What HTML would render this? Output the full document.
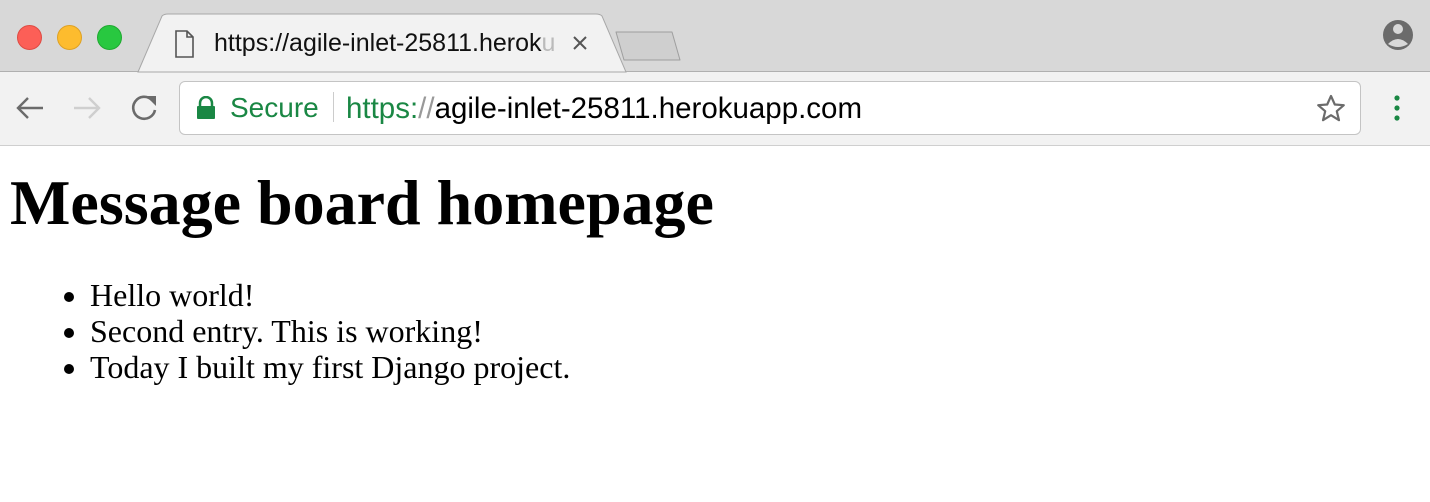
<!DOCTYPE html>
<html><head><style>
body{margin:0;width:1430px;height:502px;background:#fff;position:relative;overflow:hidden;font-family:"Liberation Sans",sans-serif}
.top{position:absolute;left:0;top:0;width:1430px;height:71px;background:#d8d8d8;border-bottom:1px solid #b0b0b0}
.dot{position:absolute;top:25px;width:23px;height:23px;border-radius:50%}
.bar{position:absolute;left:0;top:72px;width:1430px;height:73px;background:#f2f2f2;border-bottom:1px solid #cfcfcf}
.omni{position:absolute;left:179px;top:81px;width:1180px;height:52px;background:#fff;border:1px solid #c4c4c4;border-radius:6px}
.t{position:absolute;white-space:nowrap}
h1{position:absolute;left:10px;top:166px;margin:0;font:bold 64px "Liberation Serif",serif}
ul{position:absolute;left:50px;top:277px;margin:0;padding-left:40px;font:32px "Liberation Serif",serif;line-height:36px}
</style></head><body>
<div class="top"></div>
<div class="bar"></div>
<div class="omni"></div>
<div class="dot" style="left:17px;background:#fc5f57;border:1px solid #de4b43"></div>
<div class="dot" style="left:57px;background:#fdbc2e;border:1px solid #dea123"></div>
<div class="dot" style="left:97px;background:#28c840;border:1px solid #1fa930"></div>
<svg style="position:absolute;left:0;top:0" width="1430" height="146">
<path d="M138 72 L162 16 Q164 14 168 14 L596 14 Q600 14 602 16 L626 72 Z" fill="#f2f2f2" stroke="#a8a8a8"/>
<path d="M616 32 L672 32 L680 60 L624 60 Z" fill="#cfcfcf" stroke="#9e9e9e" stroke-linejoin="round"/>
<path d="M176 31 h11 l6 6 v20 h-17 z M187 31 v6 h6" fill="none" stroke="#555" stroke-width="1.6"/>
<path d="M574 37 l12 12 M586 37 l-12 12" stroke="#555" stroke-width="2"/>
<circle cx="1398" cy="35" r="15" fill="#6b6b6b"/><circle cx="1398" cy="29" r="5" fill="#d8d8d8"/><path d="M1388 44 q10 -10 20 0 q-10 6 -20 0z" fill="#d8d8d8"/>
<path d="M43 108 H18 M28 98 L18 108 L28 118" fill="none" stroke="#6b6b6b" stroke-width="2.4"/>
<path d="M74 108 H99 M89 98 L99 108 L89 118" fill="none" stroke="#cfcfcf" stroke-width="2.4"/>
<path d="M152 100 A11 11 0 1 0 155 110" fill="none" stroke="#6b6b6b" stroke-width="2.6"/><path d="M146 96 L156 96 L156 106 Z" fill="#6b6b6b"/>
<path d="M1331 96 l3.8 8.5 9 .7 -7 6 2.2 9 -8 -5 -8 5 2.2 -9 -7 -6 9 -.7z" fill="none" stroke="#6b6b6b" stroke-width="2.2" stroke-linejoin="round"/>
<circle cx="1397" cy="98" r="2.6" fill="#1a8744"/><circle cx="1397" cy="108" r="2.6" fill="#1a8744"/><circle cx="1397" cy="118" r="2.6" fill="#1a8744"/>
</svg>
<div class="t" style="left:214px;top:29px;font-size:25px;color:#111;width:350px;overflow:hidden">https://agile-inlet-25811.herok<span style="color:#bbb">u</span></div>
<svg style="position:absolute;left:196px;top:96px" width="20" height="24"><path d="M4 10 V7 a6 6 0 0 1 12 0 V10" fill="none" stroke="#1a8744" stroke-width="2.5"/><rect x="1" y="10" width="18" height="13" rx="1" fill="#1a8744"/></svg>
<div class="t" style="left:230px;top:92px;font-size:28px;color:#1a8744">Secure</div>
<div style="position:absolute;left:333px;top:92px;width:1px;height:30px;background:#ccc"></div>
<div class="t" style="left:346px;top:92px;font-size:29.5px;color:#000"><span style="color:#1a8744">https:</span><span style="color:#999">//</span>agile-inlet-25811.herokuapp.com</div>
<h1>Message board homepage</h1>
<ul><li>Hello world!</li><li>Second entry. This is working!</li><li>Today I built my first Django project.</li></ul>
</body></html>
